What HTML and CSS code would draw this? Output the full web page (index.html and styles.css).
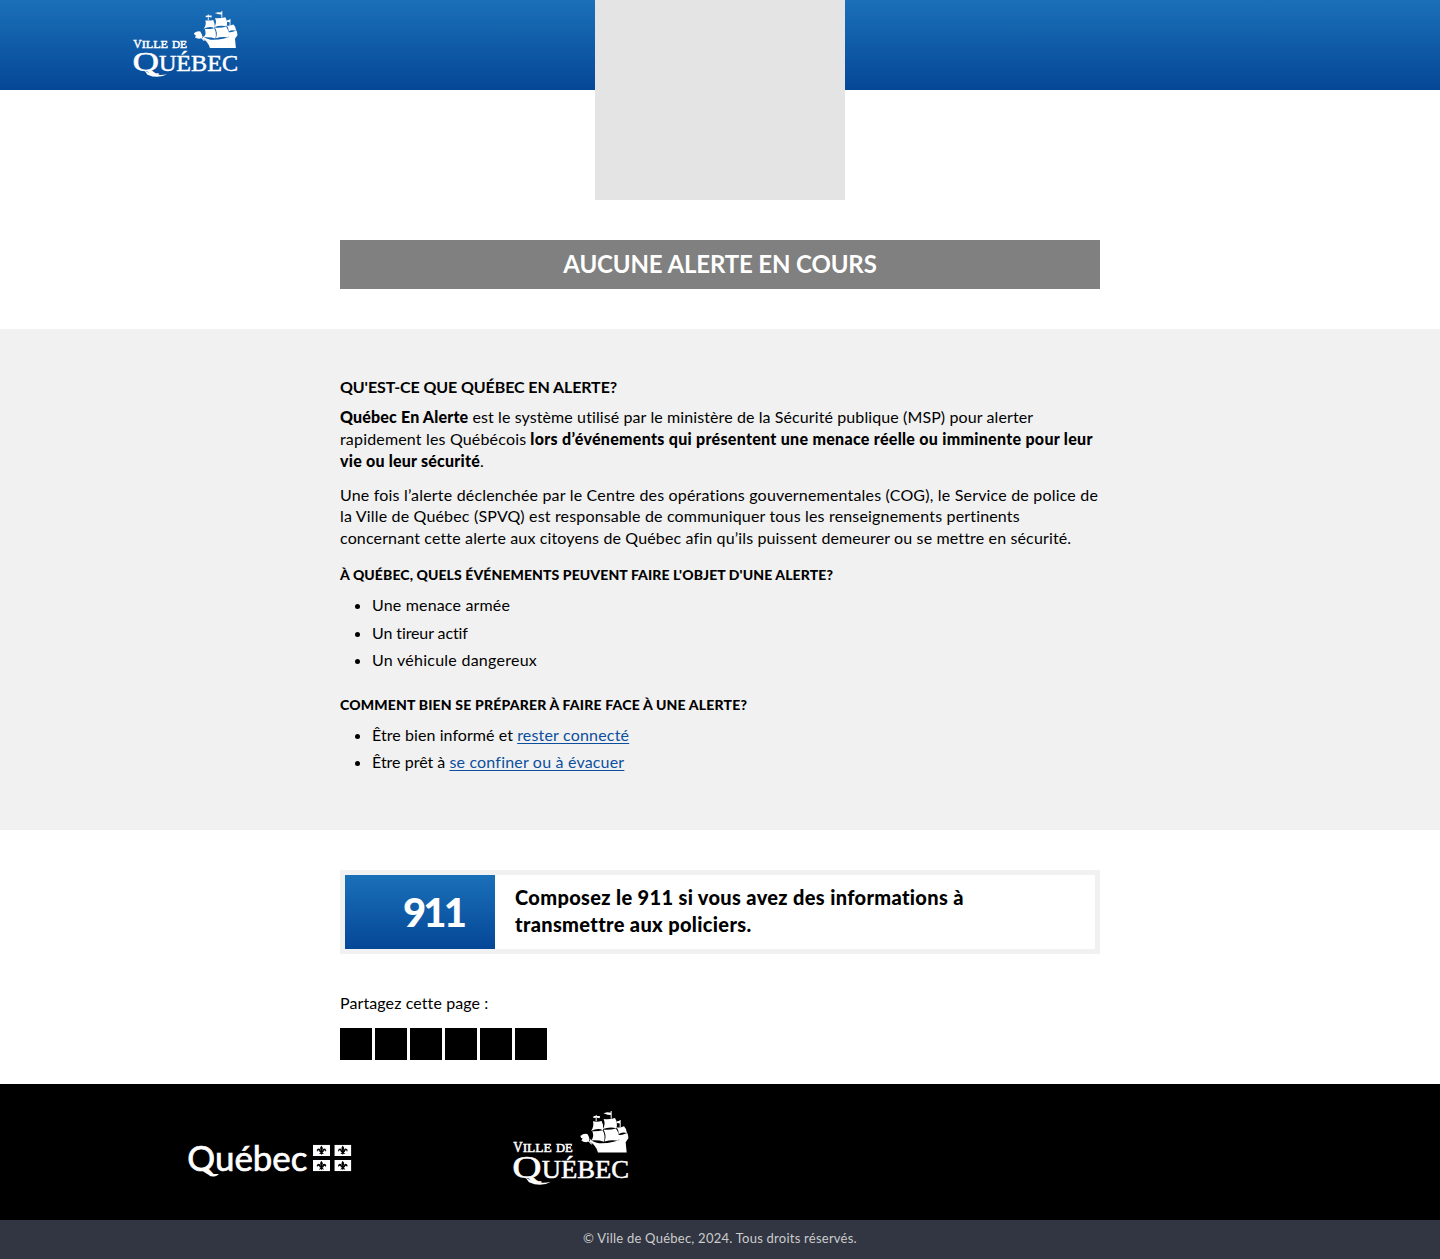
FILE: index.html
```html
<!DOCTYPE html>
<html lang="fr">
<head>
<meta charset="utf-8">
<title>Québec en alerte</title>
<link rel="stylesheet" href="styles.css">
</head>
<body>
<svg class="defs" aria-hidden="true">
  <symbol id="ship" viewBox="38 33 348 223">
    <g fill="currentColor">
      <path d="M240 108q10-9 21-6 8 10 5 22l-8 3q-10 0-15-5l4-5q-6-3-7-9z"/>
      <path d="M268 116q8 11 28 14 40 2 82-18l6 3-8 12 3 31h-86q-6-21-24-32z"/>
      <path d="M278 64q12 3 26-1 7 13 4 28-15-8-36 2 10-12 6-29zM310 57q17 2 34-3 9 15 4 31-18-6-41 2 10-12 3-30zM348 82q11 2 23-3 9 9 9 21-14-5-26 3 3-10-6-21z"/>
      <path d="M276 94q17 1 31-3 9 16 4 35-18-6-39-4 11-11 4-28zM309 89q19 2 38-3 12 18 8 37-20-5-42 2 7-19-4-36zM351 106q15 0 30-7 4 11 3 16-12 8-27 8 0-9-6-17z"/>
      <path d="M286 45h3v19h-3zM331 33h3v23h-3zM358 60h3v22h-3zM279 49l9-2 11 1-1 7-9-2-10 1zM309 40l12-3 12 1v7l-11-1zM349 65l11-3v9l-11-2z"/>
      <path d="M262 118l14 15-3 1-14-14zM76 234q38 22 76 12-30 18-66 2z"/>
    </g>
  </symbol>
  <symbol id="lys" viewBox="0 0 51 34">
    <path fill="#fff" d="M0 0h51v34H0z"/>
    <path d="M25.500 3q5 6 4 9-2 4-1 6 1-8 8-6 6 4 1 9 0-4-3-4-3 1-3 5h-3q1 5 5 6-5 1-6-1l-2 4-2-4q-2 2-6 1 4-1 5-6h-3q0-4-3-5-3 0-3 4-5-5 1-9 7-2 8 6 1-2-1-6-1-3 3-9z"/>
  </symbol>
</svg>

<header class="topbar">
  <svg class="topbar-logo logo-serif" viewBox="38 33 348 223" preserveAspectRatio="none" role="img" aria-label="Ville de Québec">
    <use href="#ship" x="38" y="33" width="348" height="223"/>
    <text x="39" y="158" font-size="42" textLength="28" lengthAdjust="spacingAndGlyphs">V</text>
    <text x="67" y="158" font-size="36" textLength="87" lengthAdjust="spacingAndGlyphs">ILLE</text>
    <text x="167" y="158" font-size="36" textLength="50" lengthAdjust="spacingAndGlyphs">DE</text>
    <text x="36" y="235" font-size="92" textLength="88" lengthAdjust="spacingAndGlyphs">Q</text>
    <text x="124" y="235" font-size="77" textLength="262" lengthAdjust="spacingAndGlyphs">UÉBEC</text>
  </svg>
  <div class="emblem"></div>
</header>

<section class="status">
  <h1 class="status-label">AUCUNE ALERTE EN COURS</h1>
</section>

<main class="info">
  <div class="column">
    <h2 class="info-title">QU'EST-CE QUE QUÉBEC EN ALERTE?</h2>
    <p><strong class="track-17">Québec En Alerte</strong> <span class="track-10">est le système utilisé par le ministère de la Sécurité publique (MSP) pour alerter</span><br>
      <span class="track-17">rapidement les Québécois</span> <strong class="track-28">lors d’événements qui présentent une menace réelle ou imminente pour leur</strong><br>
      <strong class="track-22">vie ou leur sécurité</strong>.</p>
    <p><span class="track-18">Une fois l’alerte déclenchée par le Centre des opérations gouvernementales (COG), le Service de police de</span><br>
      <span class="track-17">la Ville de Québec (SPVQ) est responsable de communiquer tous les renseignements pertinents</span><br>
      <span class="track-14">concernant cette alerte aux citoyens de Québec afin qu’ils puissent demeurer ou se mettre en sécurité.</span></p>
    <h3 class="track-10">À QUÉBEC, QUELS ÉVÉNEMENTS PEUVENT FAIRE L'OBJET D'UNE ALERTE?</h3>
    <ul>
      <li class="track-17">Une menace armée</li>
      <li class="tight">Un tireur actif</li>
      <li class="track-26">Un véhicule dangereux</li>
    </ul>
    <h3 class="track-18">COMMENT BIEN SE PRÉPARER À FAIRE FACE À UNE ALERTE?</h3>
    <ul>
      <li><span class="track-07">Être bien informé et</span> <a class="track-18" href="#">rester connecté</a></li>
      <li>Être prêt à <a class="track-18" href="#">se confiner ou à évacuer</a></li>
    </ul>
  </div>
</main>

<section class="column contact">
  <div class="call">
    <div class="call-number">911</div>
    <p class="call-text">Composez le 911 si vous avez des informations à<br>transmettre aux policiers.</p>
  </div>
  <p class="share-label track-10">Partagez cette page :</p>
  <div class="share"><i></i><i></i><i></i><i></i><i></i><i></i></div>
</section>

<footer>
  <div class="partners">
    <svg class="gouv-logo" viewBox="24 24 492 102" role="img" aria-label="Québec">
      <text class="gouv-name" x="22" y="107" textLength="360" lengthAdjust="spacingAndGlyphs">Québec</text>
      <path d="M74 104q17 15 43 13-9 10-24 5-12-4-26-15z" fill="#fff"/>
      <use href="#lys" x="399" y="29" width="51" height="34"/><use href="#lys" x="463" y="29" width="51" height="34"/>
      <use href="#lys" x="399" y="75" width="51" height="34"/><use href="#lys" x="463" y="75" width="51" height="34"/>
    </svg>
    <svg class="ville-logo logo-serif" viewBox="38 33 348 223" preserveAspectRatio="none" role="img" aria-label="Ville de Québec">
      <use href="#ship" x="38" y="33" width="348" height="223"/>
      <text x="39" y="158" font-size="42" textLength="28" lengthAdjust="spacingAndGlyphs">V</text>
      <text x="67" y="158" font-size="36" textLength="87" lengthAdjust="spacingAndGlyphs">ILLE</text>
      <text x="167" y="158" font-size="36" textLength="50" lengthAdjust="spacingAndGlyphs">DE</text>
      <text x="36" y="235" font-size="92" textLength="88" lengthAdjust="spacingAndGlyphs">Q</text>
      <text x="124" y="235" font-size="77" textLength="262" lengthAdjust="spacingAndGlyphs">UÉBEC</text>
    </svg>
  </div>
  <p class="copyright">© Ville de Québec, 2024. Tous droits réservés.</p>
</footer>
</body>
</html>
```
FILE: styles.css
```css
* { box-sizing: border-box; }
body { margin: 0; background: #fff; color: #000; font: 16px/21.6px Lato, "Open Sans", sans-serif; font-variant-ligatures: none; }
.defs { position: absolute; width: 0; height: 0; }
h1, h2, h3, p, ul { margin: 0; }
span, strong, a { white-space: nowrap; }
.logo-serif { font-family: "Liberation Serif", serif; fill: currentColor; }
.logo-serif text { stroke: currentColor; stroke-width: 1.5; }

/* Letter-spacing steps, in hundredths of a pixel */
.tight { letter-spacing: -.1px; }
.track-07 { letter-spacing: .07px; }
.track-10 { letter-spacing: .1px; }
.track-14 { letter-spacing: .14px; }
.track-17 { letter-spacing: .17px; }
.track-18 { letter-spacing: .185px; }
.track-22 { letter-spacing: .22px; }
.track-26 { letter-spacing: .26px; }
.track-28 { letter-spacing: .29px; }

.topbar { position: relative; height: 90px; padding: 11px 0 0 133px; background: linear-gradient(#1a70b8, #054797); color: #fff; }
.topbar-logo { display: block; width: 105px; height: 66px; }
.emblem { position: absolute; top: 0; left: 50%; width: 250px; height: 200px; margin-left: -125px; background: #e4e4e4; }

.status { width: 760px; margin: 0 auto; padding: 150px 0 40px; }
.status-label { height: 49px; background: #808080; color: #fff; font-size: 24px; line-height: 47px; letter-spacing: -.14px; text-align: center; }

.column { width: 760px; margin: 0 auto; }
.info { height: 501px; padding-top: 47px; background: #f1f1f1; }
.info-title { margin-bottom: 8.400px; font-size: 16px; line-height: 22px; letter-spacing: -.095px; }
.info p { margin-bottom: 12.400px; }
strong { font-weight: 900; }
h3 { margin: 17px 0 9px; font-size: 14px; line-height: 20px; font-weight: 900; }
.info ul { padding-left: 32px; margin-bottom: 24px; }
.info li { margin-bottom: 5.800px; }
a { color: #0b4f9e; text-decoration: underline; text-underline-offset: 2px; text-decoration-thickness: 1px; }

.contact { padding: 40px 0 24px; }
.call { display: flex; height: 84px; border: 5px solid #f1f1f1; }
.call-number { width: 150px; padding-right: 31px; background: linear-gradient(#1a70b8, #054797); color: #fff; font-size: 40px; font-weight: 900; line-height: 74px; letter-spacing: -2.870px; text-align: right; }
.call-text { padding: 9px 20px; font-size: 20px; font-weight: 900; line-height: 27px; letter-spacing: .34px; }
.share-label { margin: 38px 0 14px; }
.share { display: flex; gap: 3px; }
.share i { width: 32px; height: 32px; background: #000; }

.partners { display: flex; height: 136px; background: #000; color: #fff; }
.gouv-logo { width: 164px; height: 34px; margin: 59px 0 0 188px; }
.gouv-name { font: 102px Lato, sans-serif; fill: #fff; stroke: #fff; stroke-width: 2; }
.ville-logo { width: 116px; height: 74px; margin: 27px 0 0 161px; }
.copyright { height: 39px; background: #313642; color: #ccc; font-size: 13px; line-height: 37px; letter-spacing: .24px; text-align: center; }
```
